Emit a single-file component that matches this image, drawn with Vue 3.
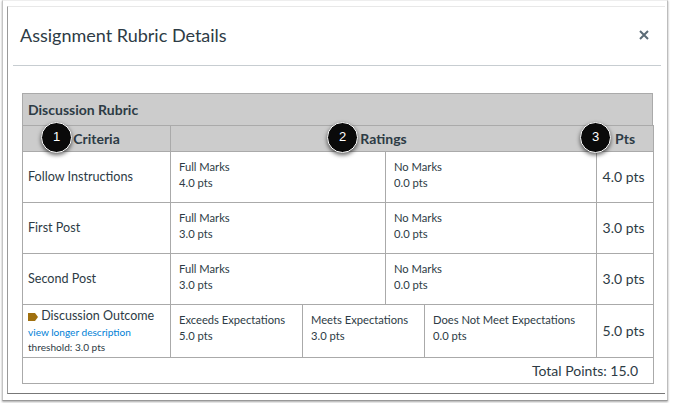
<script setup>
const rows = [
  { name: 'Follow Instructions', full: '4.0 pts', pts: '4.0 pts' },
  { name: 'First Post', full: '3.0 pts', pts: '3.0 pts' },
  { name: 'Second Post', full: '3.0 pts', pts: '3.0 pts' },
]
const ratings = [
  { label: 'Exceeds Expectations', pts: '5.0 pts' },
  { label: 'Meets Expectations', pts: '3.0 pts' },
  { label: 'Does Not Meet Expectations', pts: '0.0 pts' },
]
const markers = [
  { n: 1, left: 33 },
  { n: 2, left: 319 },
  { n: 3, left: 572 },
]
</script>

<template>
  <div class="page">
    <div class="window">
      <div class="dialog">
        <header class="head">
          <h1>Assignment Rubric Details</h1>
          <svg class="close" width="10" height="10" viewBox="0 0 10 10" aria-label="Close">
            <path d="M1 1L9 9M9 1L1 9" stroke="#5b6b76" stroke-width="2" fill="none" />
          </svg>
        </header>
        <div class="body">
          <div class="title">Discussion Rubric</div>
          <table>
            <colgroup>
              <col class="c1" /><col class="c2" /><col class="c3" /><col class="c4" /><col class="c5" /><col class="c6" />
            </colgroup>
            <thead>
              <tr class="hrow">
                <th>Criteria</th>
                <th colspan="4">Ratings</th>
                <th>Pts</th>
              </tr>
            </thead>
            <tbody>
              <tr v-for="r in rows" :key="r.name" class="row">
                <td class="name">{{ r.name }}</td>
                <td colspan="2" class="rate"><div>Full Marks</div><div>{{ r.full }}</div></td>
                <td colspan="2" class="rate"><div>No Marks</div><div>0.0 pts</div></td>
                <td class="pts">{{ r.pts }}</td>
              </tr>
              <tr class="outcome">
                <td class="out">
                  <div class="out-name">
                    <svg width="10" height="8" viewBox="0 0 10 8"><path d="M0 0H7L10 4L7 8H0Z" fill="#a0700f" /></svg>
                    Discussion Outcome
                  </div>
                  <a class="link">view longer description</a>
                  <div class="thresh">threshold: 3.0 pts</div>
                </td>
                <td class="rate"><div>{{ ratings[0].label }}</div><div>{{ ratings[0].pts }}</div></td>
                <td colspan="2" class="rate"><div>{{ ratings[1].label }}</div><div>{{ ratings[1].pts }}</div></td>
                <td class="rate"><div>{{ ratings[2].label }}</div><div>{{ ratings[2].pts }}</div></td>
                <td class="pts">5.0 pts</td>
              </tr>
              <tr class="total">
                <td colspan="6">Total Points: 15.0</td>
              </tr>
            </tbody>
          </table>
        </div>
        <span v-for="m in markers" :key="m.n" class="marker" :style="{ left: m.left + 'px' }">{{ m.n }}</span>
      </div>
    </div>
  </div>
</template>

<style>
html, body { margin: 0; background: #fff; }
</style>

<style scoped>
.page {
  width: 673px;
  height: 403px;
  box-sizing: border-box;
  padding: 0 5px 2px 2px;
  background: #fff;
  font-family: Lato, "Open Sans", sans-serif;
  color: #2d3b45;
  overflow: hidden;
}
.window {
  height: 100%;
  box-sizing: border-box;
  padding: 5px 2px 6px 4px;
  border-left: 1px solid #c4c4c4;
  border-right: 1px solid #bdbdbd;
  border-top: 1px solid #eee;
  border-bottom: 1px solid #999;
  box-shadow: 0 1px 2px rgba(0,0,0,.35);
}
.dialog {
  position: relative;
  height: 100%;
  box-sizing: border-box;
  border-top: 1px solid #e8e8e8;
  border-left: 1px solid #999;
  border-bottom: 1px solid #777;
  padding: 0 4px 0 5px;
}
.head {
  box-sizing: border-box;
  height: 59px;
  display: flex;
  align-items: center;
  justify-content: space-between;
  padding: 0 12px 2px 7px;
  border-bottom: 1px solid #c7cdd1;
}
h1 {
  margin: 0;
  font-size: 18px;
  font-weight: 400;
  line-height: 24px;
}
.close { display: block; }
.body { padding: 27px 0 0 9px; }
.title {
  width: 631px;
  box-sizing: border-box;
  height: 32px;
  padding-left: 5px;
  line-height: 31px;
  font-size: 14px;
  font-weight: 700;
  background: #ccc;
  border: 1px solid #aaa;
  border-bottom: 0;
}
table {
  width: 631px;
  table-layout: fixed;
  border-collapse: collapse;
  font-size: 11.2px;
  color: #2d3b45;
}
.c1 { width: 148px; }
.c2 { width: 132px; }
.c3 { width: 83px; }
.c4 { width: 39px; }
.c5 { width: 172px; }
.c6 { width: 57px; }
td, th { border: 1px solid #aaa; padding: 0; }
th {
  background: #ccc;
  font-size: 14px;
  font-weight: 700;
  height: 25px;
}
.row { height: 51px; }
.outcome { height: 53px; }
.name { padding: 0 0 2px 5px; font-size: 12.6px; }
.rate { padding: 0 0 4px 8px; line-height: 16px; vertical-align: middle; }
.outcome .rate { padding-bottom: 6px; }
.pts { text-align: center; font-size: 14px; padding: 0 3px 2px 0; }
.out { padding-left: 5px; }
.out-name { font-size: 12.5px; line-height: 16px; }
.out-name svg { vertical-align: -1px; }
.link { display: block; font-size: 10.1px; line-height: 16px; color: #0081d6; }
.thresh { font-size: 10.1px; line-height: 14px; }
.total td {
  height: 25px;
  text-align: right;
  padding-right: 15px;
  font-size: 14px;
}
.marker {
  position: absolute;
  top: 115px;
  width: 31px;
  height: 31px;
  box-sizing: border-box;
  border: 1.5px solid #fff;
  border-radius: 50%;
  background: #0a0a0a;
  color: #fff;
  font-family: "Liberation Sans", sans-serif;
  font-size: 13px;
  line-height: 28px;
  text-align: center;
  box-shadow: 0 2px 4px rgba(0,0,0,.6);
}
</style>
